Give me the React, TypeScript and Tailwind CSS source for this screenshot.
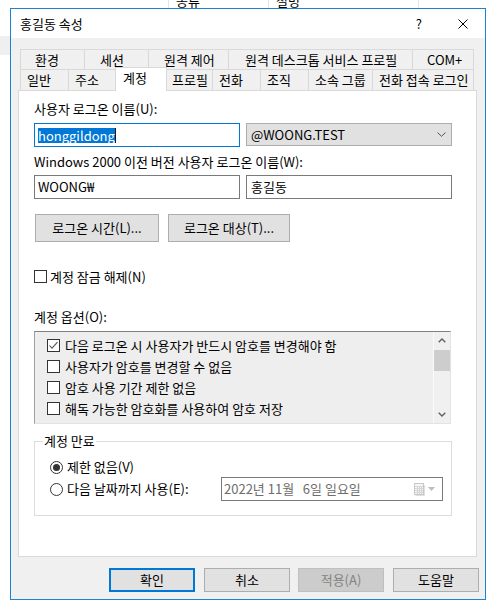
import React from "react";

const F = "font-['Noto_Sans_CJK_KR',sans-serif]";

function Check({ checked }: { checked?: boolean }) {
  return (
    <span className="w-[13px] h-[13px] border border-[#333333] bg-white flex items-center justify-center shrink-0">
      {checked && (
        <svg width="11" height="11" viewBox="0 0 11 11">
          <path d="M1.5 5.5 L4 8.2 L9.5 2.2" fill="none" stroke="#555555" strokeWidth="1.1" />
        </svg>
      )}
    </span>
  );
}

function Radio({ on }: { on?: boolean }) {
  return (
    <svg width="13" height="13" viewBox="0 0 13 13" className="shrink-0">
      <circle cx="6.5" cy="6.5" r="6" fill="white" stroke="#333333" />
      {on && <circle cx="6.5" cy="6.5" r="3.5" fill="#333333" />}
    </svg>
  );
}

const row1 = [
  { t: "환경", w: 64, pl: 14 },
  { t: "세션", w: 64, pl: 15 },
  { t: "원격 제어", w: 80, pl: 15 },
  { t: "원격 데스크톱 서비스 프로필", w: 184, pl: 16 },
  { t: "COM+", w: 62, pl: 14 },
];

const row2 = [
  { t: "일반", w: 48 },
  { t: "주소", w: 49 },
  { t: "계정", w: 48, sel: true },
  { t: "프로필", w: 47 },
  { t: "전화", w: 48 },
  { t: "조직", w: 48 },
  { t: "소속 그룹", w: 64 },
  { t: "전화 접속 로그인", w: 102 },
];

const options = [
  { t: "다음 로그온 시 사용자가 반드시 암호를 변경해야 함", c: true },
  { t: "사용자가 암호를 변경할 수 없음" },
  { t: "암호 사용 기간 제한 없음" },
  { t: "해독 가능한 암호화를 사용하여 암호 저장" },
];

export default function App() {
  return (
    <div className={`relative w-[490px] h-[606px] bg-white overflow-hidden text-[13px] leading-[16px] text-black ${F}`}>
      {/* window behind */}
      <div className="absolute left-[168px] top-0 w-px h-[8px] bg-[#e5e5e5]" />
      <div className="absolute left-[268px] top-0 w-px h-[8px] bg-[#e5e5e5]" />
      <div className="absolute left-[418px] top-0 w-px h-[8px] bg-[#e5e5e5]" />
      <div className="absolute left-[176px] top-[-7px]">종류</div>
      <div className="absolute left-[276px] top-[-7px]">설명</div>
      <div className="absolute left-0 top-[36px] w-[10px] h-[19px] bg-[#efefef]" />

      {/* dialog */}
      <div className="absolute left-[10px] top-[8px] w-[476px] h-[592px] border border-[#1883d7] bg-[#f0f0f0] flex flex-col">
        {/* title bar */}
        <div className="h-[29px] bg-white flex items-center pl-[9px] shrink-0">
          <span>홍길동 속성</span>
          <span className="ml-auto">?</span>
          <svg width="10" height="10" viewBox="0 0 10 10" className="ml-[36px] mr-[17px]">
            <path d="M0.5 0.5 L9.5 9.5 M9.5 0.5 L0.5 9.5" stroke="#000" strokeWidth="1" />
          </svg>
        </div>

        {/* body */}
        <div className="flex-1 flex flex-col pt-[11px]">
          {/* tabs */}
          <div className="ml-[9px] flex flex-col">
            <div className="flex h-[20px]">
              {row1.map((tb, i) => (
                <div
                  key={tb.t}
                  style={{ width: tb.w, paddingLeft: tb.pl }}
                  className={`h-full border-t border-l border-[#d9d9d9] flex items-center whitespace-nowrap ${i === row1.length - 1 ? "border-r" : ""}`}
                >
                  {tb.t}
                </div>
              ))}
            </div>
            <div className="flex h-[21px]">
              {row2.map((tb, i) =>
                tb.sel ? (
                  <div
                    key={tb.t}
                    className="relative z-10 w-[52px] h-[24px] -mx-[2px] -mt-[2px] shrink-0 bg-white border-t border-l border-r border-[#d9d9d9] pl-[7px] pt-[2px] whitespace-nowrap"
                  >
                    {tb.t}
                  </div>
                ) : (
                  <div
                    key={tb.t}
                    style={{ width: tb.w }}
                    className={`h-full shrink-0 border-t border-l border-[#d9d9d9] flex items-center pl-[6px] whitespace-nowrap ${i === row2.length - 1 ? "border-r" : ""}`}
                  >
                    {tb.t}
                  </div>
                )
              )}
            </div>
          </div>

          {/* panel */}
          <div className="ml-[7px] w-[459px] h-[467px] shrink-0 border border-[#d9d9d9] bg-white flex flex-col pl-[15px] pt-[10px]">
            <div className="h-[16px] flex items-center">사용자 로그온 이름(U):</div>
            <div className="mt-[6px] flex gap-[6px] items-start">
              <div className="w-[206px] h-[24px] border border-[#0078d7] bg-white flex items-center pl-[3px]">
                <span className="bg-[#0078d7] text-white h-[15px] leading-[15px]">honggildong</span>
                <span className="w-px h-[15px] bg-[#1a1a1a]" />
              </div>
              <div className="w-[206px] h-[23px] border border-[#adadad] bg-[#e1e1e1] flex items-center pl-[4px] pr-[5px]">
                <span>@WOONG.TEST</span>
                <svg width="9" height="5" viewBox="0 0 9 5" className="ml-auto">
                  <path d="M0.5 0.5 L4.5 4.3 L8.5 0.5" fill="none" stroke="#555555" strokeWidth="1" />
                </svg>
              </div>
            </div>

            <div className="mt-[7px] h-[16px] flex items-center">Windows 2000 이전 버전 사용자 로그온 이름(W):</div>
            <div className="mt-[5px] flex gap-[6px]">
              <div className="w-[206px] h-[24px] border border-[#7a7a7a] bg-white flex items-center pl-[3px]">WOONG₩</div>
              <div className="w-[206px] h-[24px] border border-[#7a7a7a] bg-white flex items-center pl-[4px]">홍길동</div>
            </div>

            <div className="mt-[15px] flex">
              <div className="ml-[1px] w-[124px] h-[28px] border border-[#adadad] bg-[#e1e1e1] flex items-center justify-center">로그온 시간(L)...</div>
              <div className="ml-[9px] w-[122px] h-[28px] border border-[#adadad] bg-[#e1e1e1] flex items-center justify-center">로그온 대상(T)...</div>
            </div>

            <div className="mt-[28px] h-[13px] flex items-center gap-[3px]">
              <Check />
              <span>계정 잠금 해제(N)</span>
            </div>

            <div className="mt-[26px] h-[16px] flex items-center">계정 옵션(O):</div>

            <div className="mt-[6px] w-[417px] h-[93px] border-t border-l border-t-[#828282] border-l-[#a0a0a0] border-r border-b border-r-[#e3e3e3] border-b-[#e3e3e3] bg-[#eeeeee] flex">
              <div className="flex-1 flex flex-col pt-[3px] pl-[12px]">
                {options.map((o) => (
                  <div key={o.t} className="h-[21px] flex items-center gap-[5px]">
                    <Check checked={o.c} />
                    <span className="whitespace-nowrap">{o.t}</span>
                  </div>
                ))}
              </div>
              <div className="w-[17px] bg-[#f0f0f0] border-l border-[#fafafa] flex flex-col">
                <div className="h-[17px] flex items-center justify-center">
                  <svg width="8" height="5" viewBox="0 0 8 5">
                    <path d="M0.7 4.3 L4 1 L7.3 4.3" fill="none" stroke="#606060" strokeWidth="1.4" />
                  </svg>
                </div>
                <div className="mt-[1px] h-[21px] bg-[#cdcdcd]" />
                <div className="flex-1" />
                <div className="h-[17px] flex items-center justify-center">
                  <svg width="8" height="5" viewBox="0 0 8 5">
                    <path d="M0.7 0.7 L4 4 L7.3 0.7" fill="none" stroke="#606060" strokeWidth="1.4" />
                  </svg>
                </div>
              </div>
            </div>

            <div className="relative mt-[17px] w-[418px] h-[75px] border border-[#dcdcdc] flex flex-col pt-[17px]">
              <span className="absolute left-[8px] top-[-9px] bg-white px-[1px]">계정 만료</span>
              <div className="h-[16px] flex items-center gap-[4px] pl-[15px]">
                <Radio on />
                <span>제한 없음(V)</span>
              </div>
              <div className="mt-[2px] h-[24px] flex items-center pl-[15px]">
                <Radio />
                <span className="ml-[4px]">다음 날짜까지 사용(E):</span>
                <div className="ml-auto mr-[8px] w-[222px] h-[24px] border border-[#7a7a7a] bg-white flex items-center pl-[2px] pr-[7px]">
                  <span className="text-[#6d6d6d] whitespace-pre">2022년 11월   6일 일요일</span>
                  <svg width="11" height="13" viewBox="0 0 11 13" className="ml-auto">
                    <rect x="0.5" y="0.5" width="9" height="11" fill="#f6f6f6" stroke="#c8c8c8" />
                    <path d="M1 3.5H9M1 5.5H9M1 7.5H9M1 9.5H9M3.5 3V11M5.5 3V11M7.5 3V11" stroke="#d6d6d6" strokeWidth="1" />
                    <path d="M10.5 2V12.5H1.5" stroke="#e0e0e0" fill="none" />
                  </svg>
                  <svg width="7" height="4" viewBox="0 0 7 4" className="ml-[3px]">
                    <path d="M0 0H7L3.5 4Z" fill="#bdbdbd" />
                  </svg>
                </div>
              </div>
            </div>
          </div>

          {/* dialog buttons */}
          <div className="mt-[11px] flex justify-end pr-[6px]">
            <div className="w-[86px] h-[24px] border-2 border-[#0078d7] bg-[#e1e1e1] flex items-center justify-center">확인</div>
            <div className="ml-[9px] w-[86px] h-[24px] border border-[#adadad] bg-[#e1e1e1] flex items-center justify-center">취소</div>
            <div className="ml-[8px] w-[86px] h-[24px] border border-[#bfbfbf] bg-[#cccccc] text-[#838383] flex items-center justify-center">적용(A)</div>
            <div className="ml-[9px] w-[86px] h-[24px] border border-[#adadad] bg-[#e1e1e1] flex items-center justify-center">도움말</div>
          </div>
        </div>
      </div>
    </div>
  );
}
